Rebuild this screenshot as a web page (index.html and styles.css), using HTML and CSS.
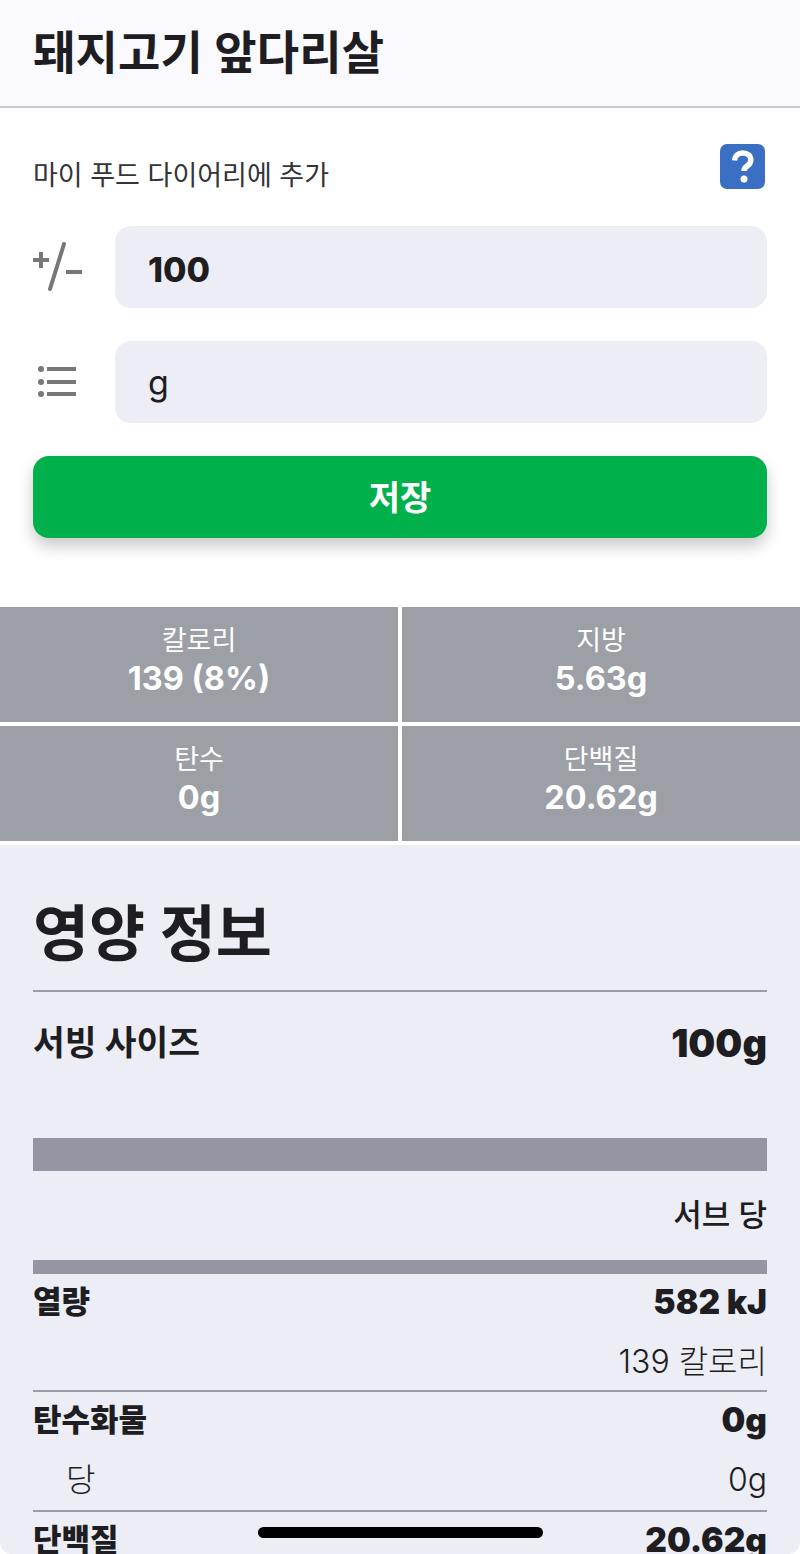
FILE: index.html
```html
<!DOCTYPE html>
<html lang="ko">
<head>
    <meta charset="UTF-8">
    <meta name="viewport" content="width=device-width, initial-scale=1.0">
    <title>돼지고기 앞다리살</title>
    <link rel="stylesheet" href="styles.css">
</head>
<body>
    <header class="top-bar">
        <h1>돼지고기 앞다리살</h1>
    </header>

    <!-- 다이어리 추가 폼 -->
    <form class="diary-form">
        <div class="form-head">
            <span class="form-title">마이 푸드 다이어리에 추가</span>
            <svg class="help-icon" viewBox="0 0 45 45" aria-label="도움말">
                <rect width="45" height="45" rx="7" fill="#3b6fc4"/>
                <path d="M14.5 16.5c.3-4.6 3.6-7.5 8.2-7.5 4.8 0 8.1 2.8 8.1 6.9 0 3-1.5 4.7-3.8 6.2-2.3 1.5-3 2.5-3 4.9" fill="none" stroke="#fff" stroke-width="5.500"/>
                <circle cx="24" cy="35" r="3.500" fill="#fff"/>
            </svg>
        </div>
        <div class="form-row">
            <svg class="row-icon" viewBox="0 0 52 60">
                <path d="M0 23h16M8 15v16M33 35h16" fill="none" stroke="#777" stroke-width="4"/>
                <path d="M31 7 17 52" fill="none" stroke="#777" stroke-width="4" stroke-linecap="round"/>
            </svg>
            <div class="field field-strong">100</div>
        </div>
        <div class="form-row">
            <svg class="row-icon" viewBox="0 0 52 60">
                <circle cx="8" cy="17" r="3" fill="#777"/>
                <circle cx="8" cy="30" r="3" fill="#777"/>
                <circle cx="8" cy="42" r="3" fill="#777"/>
                <path d="M14 17h29M14 30h29M14 42h29" stroke="#777" stroke-width="4"/>
            </svg>
            <div class="field">g</div>
        </div>
        <button type="button" class="save-btn">저장</button>
    </form>

    <!-- 요약 -->
    <section class="summary">
        <div class="summary-cell"><span>칼로리</span><strong>139 (8%)</strong></div>
        <div class="summary-cell"><span>지방</span><strong>5.63g</strong></div>
        <div class="summary-cell"><span>탄수</span><strong>0g</strong></div>
        <div class="summary-cell"><span>단백질</span><strong>20.62g</strong></div>
    </section>

    <!-- 영양 정보 -->
    <section class="nutrition">
        <h2>영양 정보</h2>
        <div class="serving">
            <span>서빙 사이즈</span>
            <strong>100g</strong>
        </div>
        <div class="thick-bar"></div>
        <div class="per-serve">서브 당</div>
        <div class="mid-bar"></div>
        <div class="nut-group">
            <div class="nut-row nut-main"><span>열량</span><span class="nut-val">582 kJ</span></div>
            <div class="nut-row nut-sub nut-right"><span>139 칼로리</span></div>
        </div>
        <div class="nut-group">
            <div class="nut-row nut-main"><span>탄수화물</span><span class="nut-val">0g</span></div>
            <div class="nut-row nut-sub"><span class="indent">당</span><span>0g</span></div>
        </div>
        <div class="nut-group">
            <div class="nut-row nut-main"><span>단백질</span><span class="nut-val">20.62g</span></div>
        </div>
    </section>

    <div class="home-bar"></div>
</body>
</html>
```

FILE: styles.css
```css
html, body {
    margin: 0;
    height: 1554px;
    overflow: hidden;
}
html {
    background-color: #fff;
}
body {
    position: relative;
    font-family: Inter, "Noto Sans CJK KR", sans-serif;
    color: #1d1d22;
    background-color: #ecedf5;
    border-radius: 0 0 12px 12px;
}
.top-bar {
    height: 106px;
    padding: 0 33px;
    display: flex;
    align-items: center;
    background-color: #f9f9fe;
    border-bottom: 2px solid #c7c7cd;
}
.top-bar h1 {
    margin: -8px 0 0;
    font-size: 46px;
    font-weight: 700;
    letter-spacing: 0.2px;
}
.diary-form {
    height: 499px;
    box-sizing: border-box;
    padding: 36px 33px 0;
    background-color: #fff;
}
.form-head {
    height: 45px;
    margin-bottom: 37px;
    display: flex;
    justify-content: space-between;
    align-items: flex-end;
    padding-right: 2px;
}
.form-title {
    font-size: 27px;
    line-height: 34px;
    color: #33333a;
    margin-bottom: -4px;
}
.help-icon {
    width: 45px;
    height: 45px;
}
.form-row {
    display: flex;
    align-items: center;
    margin-bottom: 33px;
}
.row-icon {
    width: 52px;
    height: 60px;
    margin-right: 30px;
    flex: none;
}
.field {
    flex: 1;
    height: 82px;
    box-sizing: border-box;
    padding-left: 33px;
    display: flex;
    align-items: center;
    font-size: 34px;
    background-color: #ecedf5;
    border-radius: 16px;
}
.field-strong {
    padding-top: 4px;
    font-weight: 800;
}
.save-btn {
    display: block;
    width: 100%;
    height: 82px;
    padding: 0 0 4px;
    border: 0;
    border-radius: 16px;
    background-color: #00b04b;
    color: #fff;
    font-family: inherit;
    font-size: 34px;
    font-weight: 700;
    box-shadow: 0 8px 16px rgba(0, 0, 0, 0.22);
}
.summary {
    display: grid;
    grid-template-columns: 1fr 1fr;
    gap: 4px;
    padding-bottom: 4px;
    background-color: #fff;
}
.summary-cell {
    height: 115px;
    box-sizing: border-box;
    padding-top: 17px;
    display: flex;
    flex-direction: column;
    align-items: center;
    background-color: #9c9fa6;
    color: #fff;
}
.summary-cell span {
    font-size: 27px;
    line-height: 34px;
}
.summary-cell strong {
    font-size: 32.5px;
    line-height: 42px;
    font-weight: 700;
}
.nutrition {
    padding: 0 33px;
}
.nutrition h2 {
    margin: 0;
    height: 147px;
    box-sizing: border-box;
    padding-top: 47px;
    font-size: 61px;
    line-height: 84px;
    font-weight: 700;
    border-bottom: 2px solid #9a9ca6;
}
.serving {
    height: 146px;
    box-sizing: border-box;
    padding-top: 26px;
    display: flex;
    justify-content: space-between;
    font-size: 34.5px;
    line-height: 50px;
    font-weight: 700;
}
.serving strong {
    font-size: 38px;
    font-weight: 900;
}
.thick-bar {
    height: 33px;
    background-color: #9497a3;
}
.per-serve {
    height: 89px;
    box-sizing: border-box;
    padding-top: 21px;
    text-align: right;
    font-size: 31px;
    line-height: 46px;
    font-weight: 500;
}
.mid-bar {
    height: 14px;
    background-color: #9497a3;
}
.nut-group {
    padding-top: 6px;
    border-bottom: 2px solid #9a9ca6;
}
.nut-group:last-child {
    border-bottom: 0;
}
.nut-row {
    display: flex;
    justify-content: space-between;
    line-height: 44px;
}
.nut-main {
    height: 60px;
    font-size: 31px;
    font-weight: 900;
}
.nut-val {
    font-size: 33.5px;
}
.nut-sub {
    height: 52px;
    font-size: 32px;
    font-weight: 300;
}
.nut-right {
    height: 50px;
    justify-content: flex-end;
}
.indent {
    padding-left: 33px;
}
.home-bar {
    position: absolute;
    left: 258px;
    top: 1527px;
    width: 285px;
    height: 11px;
    border-radius: 6px;
    background-color: #000;
}
```
